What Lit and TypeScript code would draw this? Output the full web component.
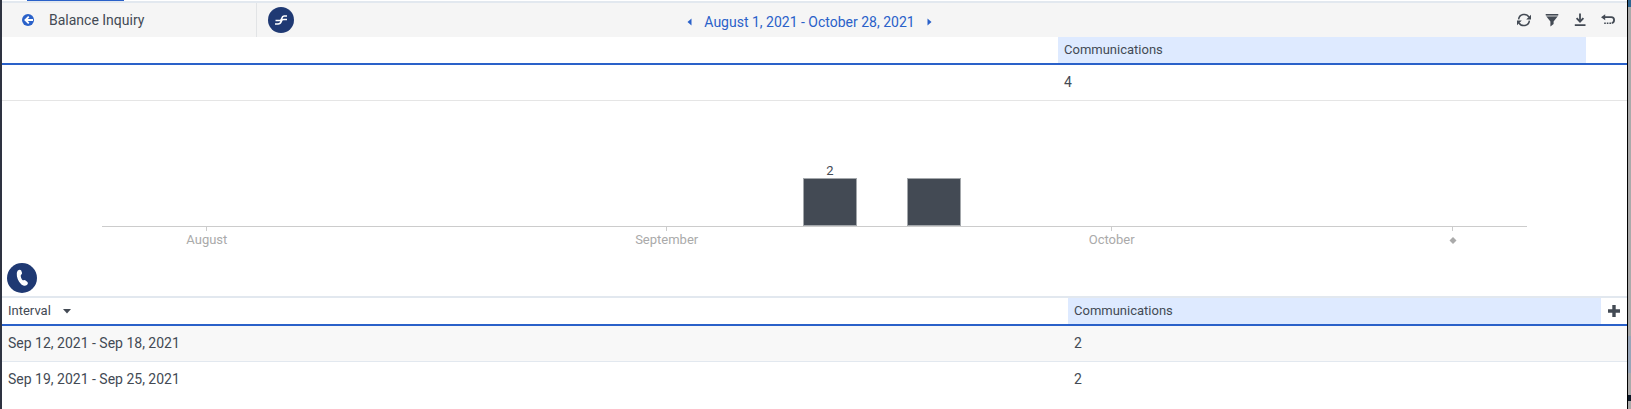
import { LitElement, html, css, svg } from "lit";
import { customElement, state } from "lit/decorators.js";

const DAYS = 96;
const bars = [
  { day: 49, value: 2, label: "2" },
  { day: 56, value: 2, label: "" },
];
const ticks = [
  { day: 7, label: "August" },
  { day: 38, label: "September" },
  { day: 68, label: "October" },
  { day: 91, label: "" },
];
const rows = [
  { interval: "Sep 12, 2021 - Sep 18, 2021", count: 2 },
  { interval: "Sep 19, 2021 - Sep 25, 2021", count: 2 },
];

const icons = {
  back: svg`<circle cx="7" cy="7" r="6" fill="#2a61c9"/><path d="M12 7H5M7.800 3.600 4.400 7l3.400 3.400" fill="none" stroke="#fff" stroke-width="1.800"/>`,
  refresh: svg`<path d="M1.600 6.400A5.600 5.600 0 0 1 12 4.200M12.400 7.600A5.600 5.600 0 0 1 2 9.800" fill="none" stroke="currentColor" stroke-width="1.500"/><path d="M14 1.800v4.800H9.200zM0 12.200V7.400h4.800z" fill="currentColor"/>`,
  filter: svg`<path d="M.8 1h12.400v1.500l-1 1.500H1.800l-1-1.500z" fill="currentColor" opacity=".6"/><path d="M.8 1h12.400v1H.8zM1.800 4h10.400L8.600 8.400V11l-3.200 2.500V8.400z" fill="currentColor"/>`,
  download: svg`<path d="M7 .6v7M1.800 12.200h10.700" fill="none" stroke="currentColor" stroke-width="1.800"/><path d="M3.600 5.200 7 8.600l3.400-3.400" fill="none" stroke="currentColor" stroke-width="1.900"/>`,
  undo: svg`<path d="M2 4.200h8.200a2.900 2.900 0 0 1 2.900 2.900c0 1.600-.8 2.800-2.400 3" fill="none" stroke="currentColor" stroke-width="1.800"/><path d="M4.200 1.200v6L0 4.200zM3.200 9.400h1.600V11H3.200zM5.800 9.400h1.600V11H5.800zM8.400 9.400H10V11H8.400z" fill="currentColor"/>`,
  plus: svg`<path d="M7 1v12M1 7h12" stroke="currentColor" stroke-width="3.400"/>`,
};

const icon = (name: keyof typeof icons) =>
  html`<svg class="icon" viewBox="0 0 14 14" aria-hidden="true">${icons[name]}</svg>`;

@customElement("app-root")
export class AppRoot extends LitElement {
  static styles = css`
    :host {
      display: block;
      font-family: Roboto, "Liberation Sans", sans-serif;
      font-size: 14px;
      line-height: 20px;
      color: #434a54;
    }
    * { box-sizing: border-box; }
    .frame {
      display: grid;
      grid-template-columns: 2px minmax(0, 1fr) 4px;
      min-height: 100vh;
      background: #fff;
    }
    .edge { background: #2e3341; }
    .backdrop {
      border-left: 1px solid #000;
      background: linear-gradient(#2e6591 7px, #aaa 7px, #aaa 336px, #98a5b8 336px, #98a5b8 373px, #aaa 373px, #aaa 395px, #0b1727 395px, #0b1727 401px, #aaa 401px);
    }
    .tabs { height: 3px; border-bottom: 2px solid #e2e8ef; padding-left: 25px; }
    .tab { width: 97px; height: 1px; background: #2a61c9; }
    button {
      display: flex;
      align-items: center;
      justify-content: center;
      margin: 0;
      padding: 0;
      border: 0;
      background: none;
      color: inherit;
      font: inherit;
    }
    .icon { display: block; width: 14px; height: 14px; }
    .toolbar {
      display: grid;
      grid-template-columns: 1fr auto 1fr;
      align-items: center;
      height: 34px;
      padding-right: 10px;
      background: #f5f5f5;
    }
    .left { display: flex; align-items: center; height: 34px; }
    .title {
      display: flex;
      align-items: center;
      gap: 14px;
      width: 255px;
      height: 34px;
      padding-left: 19px;
      border-right: 1px solid #e2e4e6;
    }
    .title h1 { margin: 0; font-size: 14px; font-weight: 400; }
    .badge { display: block; border-radius: 50%; background: #1f3973; }
    .small { width: 26px; height: 26px; margin-left: 11px; }
    .period { display: flex; align-items: center; gap: 12px; color: #2a61c9; padding-top: 4px; }
    .step { width: 5px; height: 20px; }
    .arrow { width: 5px; height: 8px; display: block; }
    .actions { display: flex; justify-content: flex-end; gap: 14px; padding-right: 2px; }
    table { display: block; width: 100%; }
    thead, tbody { display: block; }
    tr { display: grid; }
    .summary tr { grid-template-columns: 2fr 1fr 41px; }
    .detail tr { grid-template-columns: 2fr 1fr 26px; }
    th, td { padding: 0 6px; text-align: left; font-weight: 400; }
    td { height: 35px; line-height: 35px; }
    thead th, thead td { font-size: 13px; height: 26px; line-height: 26px; }
    thead tr { border-bottom: 2px solid #2a61c9; }
    .measure { background: #deeaff; }
    .summary tbody tr { border-bottom: 1px solid #e5e5e5; }
    .detail { border-top: 2px solid #e2e8ef; }
    .detail tbody tr:nth-child(odd) { background: #f8f8f8; border-bottom: 1px solid #e2e8ef; }
    .sort { gap: 12px; height: 26px; }
    .caret { width: 8px; height: 5px; display: block; }
    .add { width: 26px; height: 26px; }
    .tool { padding: 0; }
    .chart { padding: 0 100px; }
    .plot, .axis { display: grid; grid-template-columns: repeat(96, minmax(0, 1fr)); padding-left: 1px; }
    .plot { height: 125px; align-items: end; }
    .bar { display: flex; flex-direction: column; align-items: center; font-size: 13px; line-height: 14px; }
    .fill { width: 54px; background: #434a54; border: 1px solid #a3a7ab; }
    .axis { border-top: 1px solid #ccc; color: #aaa; font-size: 13px; }
    .tick { display: flex; flex-direction: column; align-items: center; line-height: 18px; }
    .mark { width: 1px; height: 4px; background: #ccc; }
    .diamond { width: 8px; height: 18px; display: block; }
    .channel { padding: 14px 5px 3px; }
    .large { width: 30px; height: 30px; }
  `;

  @state() private descending = true;

  private place(day: number, half: number) {
    return `grid-column: ${day - half + 1} / ${Math.min(day + half, DAYS) + 1}`;
  }

  render() {
    const list = this.descending ? rows : [...rows].reverse();
    return html`
      <div class="frame">
        <div class="edge"></div>
        <main>
          <div class="tabs"><div class="tab"></div></div>
          <header class="toolbar">
            <div class="left">
              <div class="title">
                <button aria-label="Back">${icon("back")}</button>
                <h1>Balance Inquiry</h1>
              </div>
              <svg class="badge small" viewBox="0 0 26 26" aria-hidden="true">
                <path d="M7.500 13.500h4.500c2.500 0 1-4.500 4-4.500h3M7 17h3c4.500 0 2-4.500 5.500-4.500H19" fill="none" stroke="#fff" stroke-width="1.700" />
              </svg>
            </div>
            <div class="period">
              <button class="step" aria-label="Previous period"><svg class="arrow" viewBox="0 0 5 8"><path d="M4.500.5v7L.5 4z" fill="currentColor" /></svg></button>
              <span>August 1, 2021 - October 28, 2021</span>
              <button class="step" aria-label="Next period"><svg class="arrow" viewBox="0 0 5 8"><path d="M.5.5v7l4-3.500z" fill="currentColor" /></svg></button>
            </div>
            <div class="actions">
              <button aria-label="Refresh">${icon("refresh")}</button>
              <button aria-label="Filter">${icon("filter")}</button>
              <button aria-label="Download">${icon("download")}</button>
              <button aria-label="Undo">${icon("undo")}</button>
            </div>
          </header>
          <table class="summary">
            <thead><tr><td class="tool"></td><th class="measure" scope="col">Communications</th></tr></thead>
            <tbody><tr><td></td><td>4</td></tr></tbody>
          </table>
          <section class="chart" aria-label="Communications by week">
            <div class="plot">
              ${bars.map((b) => html`
                <div class="bar" style=${this.place(b.day, 3)}>
                  <span>${b.label}</span>
                  <div class="fill" style="height: ${b.value * 24}px"></div>
                </div>`)}
            </div>
            <div class="axis">
              ${ticks.map((t) => html`
                <div class="tick" style=${this.place(t.day, 5)}>
                  <div class="mark"></div>
                  ${t.label
                    ? html`<span>${t.label}</span>`
                    : html`<svg class="diamond" viewBox="0 0 8 18" aria-hidden="true"><path d="M4 6l3.500 3.500L4 13 .5 9.500z" fill="#aaa" /></svg>`}
                </div>`)}
            </div>
          </section>
          <div class="channel">
            <svg class="badge large" viewBox="0 0 30 30" role="img" aria-label="Calls">
              <path d="M11.200 7.200c1.200-.9 2.300-.7 3 .3l.8 2.300c.2.900-.2 1.500-1.200 2.100-.3 2 .6 4.300 2.300 5.500 1.100-.5 1.800-.4 2.500.2l1.800 1.500c.8.900.6 2.100-.5 2.900-1.600 1.200-3.900.8-5.700-.8-3.200-2.900-4.700-6.900-4.400-10.600.1-1.500.5-2.700 1.400-3.400z" fill="#fff" />
            </svg>
          </div>
          <table class="detail">
            <thead>
              <tr>
                <th scope="col">
                  <button class="sort" @click=${() => (this.descending = !this.descending)}>
                    Interval
                    <svg class="caret" viewBox="0 0 8 5" aria-hidden="true"><path d="M0 0h8L4 4.500z" fill="currentColor" /></svg>
                  </button>
                </th>
                <th class="measure" scope="col">Communications</th>
                <th class="tool">
                  <button class="add" aria-label="Add column">${icon("plus")}</button>
                </th>
              </tr>
            </thead>
            <tbody>
              ${list.map((r) => html`<tr><td>${r.interval}</td><td>${r.count}</td></tr>`)}
            </tbody>
          </table>
        </main>
        <div class="backdrop"></div>
      </div>
    `;
  }
}
